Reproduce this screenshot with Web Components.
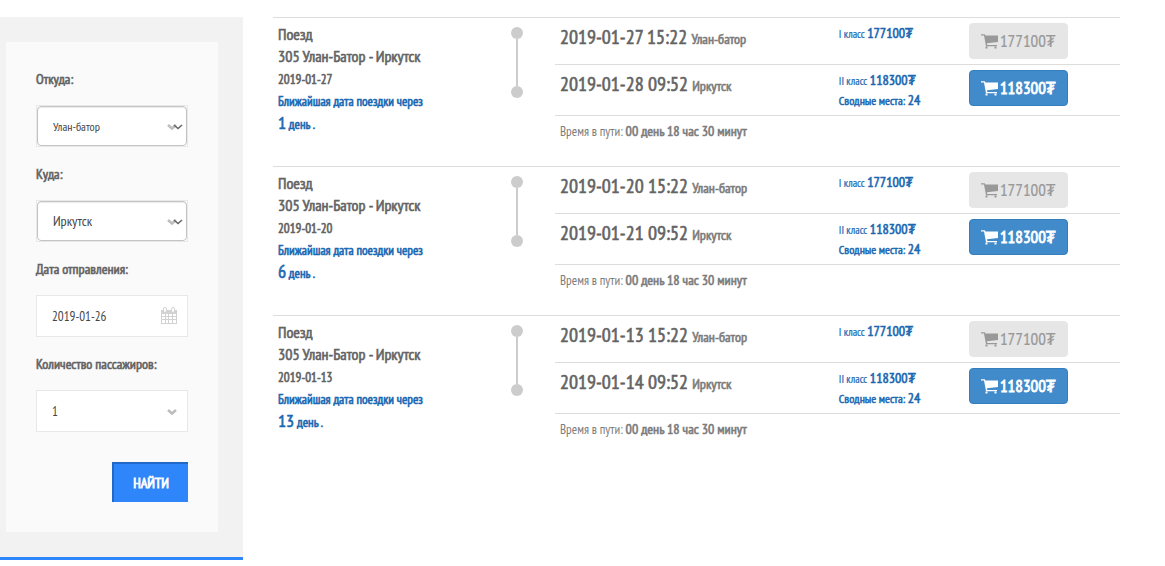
<!DOCTYPE html>
<html lang="ru">
<head>
<meta charset="utf-8">
<meta name="viewport" content="width=device-width, initial-scale=1">
<title>Поезд Улан-Батор - Иркутск</title>
<style>
body { margin: 0; background: #fff; color: #636363; font-family: "PT Sans Narrow", "Liberation Sans Narrow", "Noto Sans", sans-serif; font-size: 14px; line-height: 20px; --heavy: 0.6px; }
</style>
</head>
<body>
<booking-page>
  <search-panel slot="side">
    <search-field kind="select" label="Откуда:" value="Улан-батор" size="small"></search-field>
    <search-field kind="select" label="Куда:" value="Иркутск"></search-field>
    <search-field kind="date" label="Дата отправления:" value="2019-01-26"></search-field>
    <search-field kind="count" label="Количество пассажиров:" value="1"></search-field>
  </search-panel>
  <train-trip date="2019-01-27" arrival="2019-01-28" days="1"></train-trip>
  <train-trip date="2019-01-20" arrival="2019-01-21" days="6"></train-trip>
  <train-trip date="2019-01-13" arrival="2019-01-14" days="13"></train-trip>
</booking-page>

<script>
class BookingPage extends HTMLElement {
  constructor() {
    super();
    this.attachShadow({ mode: 'open' }).innerHTML = `
      <style>
        :host { display: grid; grid-template-columns: 243px minmax(0, 1fr); gap: 30px; align-items: start; padding: 17px 45px 0 0; }
        main { display: flex; flex-direction: column; }
      </style>
      <slot name="side"></slot>
      <main><slot></slot></main>`;
  }
}

class SearchPanel extends HTMLElement {
  constructor() {
    super();
    this.attachShadow({ mode: 'open' }).innerHTML = `
      <style>
        :host { display: block; background: #f2f2f2; border-bottom: 3px solid #2f86fa; padding: 25px 25px 25px 6px; }
        form { background: #fafafa; padding: 27px 30px 30px; display: flex; flex-direction: column; gap: 17px; }
        button { align-self: flex-end; width: 76px; height: 40px; margin-top: 13px; padding: 0; border: 0 solid #2268c6; border-width: 2px 0 0 2px; background: #2f86fa; color: #fff; font-family: inherit; font-size: 14px; -webkit-text-stroke: 0.8px; cursor: pointer; }
      </style>
      <form><slot></slot><button type="button">НАЙТИ</button></form>`;
  }
}

const chevron = (cls, colour, w) => `<svg class="${cls}" width="10" height="6" viewBox="0 0 10 6" aria-hidden="true"><path d="M1 1l4 3.5L9 1" fill="none" stroke="${colour}" stroke-width="${w}"/></svg>`;
const calendar = `<svg class="cal" width="16" height="17" viewBox="0 0 16 17" aria-hidden="true"><path d="M0 3h16v14H0z" fill="#d2d2d2"/><path d="M1 7h3v2H1zM5 7h2v2H5zM8 7h3v2H8zM12 7h3v2h-3zM1 10h3v2H1zM5 10h2v2H5zM8 10h3v2H8zM12 10h3v2h-3zM1 13h3v3H1zM5 13h2v3H5zM8 13h3v3H8zM12 13h3v3h-3z" fill="#fff"/><rect x="2.5" y=".5" width="3" height="5" rx="1.5" fill="#fff" stroke="#d2d2d2"/><rect x="10.500" y=".5" width="3" height="5" rx="1.5" fill="#fff" stroke="#d2d2d2"/></svg>`;

class SearchField extends HTMLElement {
  connectedCallback() {
    const { kind, label, value, size } = {
      kind: this.getAttribute('kind'), label: this.getAttribute('label'),
      value: this.getAttribute('value'), size: this.getAttribute('size') || ''
    };
    const control = kind === 'date'
      ? `<input id="control" type="text" value="${value}">${calendar}`
      : `<select id="control" class="${size}"><option>${value}</option></select>${chevron('chev', '#bdbdbd', 2.6)}${kind === 'select' ? chevron('chev native', '#666', 1.6) : ''}`;
    const root = this.shadowRoot || this.attachShadow({ mode: 'open' });
    root.innerHTML = `
      <style>
        :host { display: flex; flex-direction: column; gap: 16px; }
        label { -webkit-text-stroke: var(--heavy); height: 20px; line-height: 20px; white-space: nowrap; }
        .box { position: relative; box-sizing: border-box; height: 42px; border: 1px solid #e8e8e8; background: #fff; }
        select, input { appearance: none; display: block; box-sizing: border-box; width: 100%; height: 40px; margin: 0; padding: 0 28px 0 15px; border: 0; background: transparent; color: #444; font-family: inherit; font-size: 13px; outline: 0; }
        .select select { border: 1px solid #c4c4c4; border-radius: 4px; box-shadow: inset 0 1px 1px rgba(0,0,0,.08); font-size: 14px; }
        .select select.small { font-size: 12px; }
        svg { position: absolute; pointer-events: none; }
        .chev { right: 10px; top: 18px; }
        .native { right: 4px; }
        .cal { right: 10px; top: 11px; }
      </style>
      <label for="control">${label}</label>
      <div class="box ${kind}">${control}</div>`;
  }
}

class BuyButton extends HTMLElement {
  connectedCallback() {
    const off = this.hasAttribute('disabled');
    const root = this.shadowRoot || this.attachShadow({ mode: 'open' });
    root.innerHTML = `
      <style>
        :host { display: block; }
        button { display: flex; align-items: center; justify-content: center; gap: 2px; box-sizing: border-box; width: 99px; height: 36px; margin: 0; padding: 0; border: 1px solid #357ebd; border-radius: 4px; background: #428bca; color: #fff; font-family: inherit; font-size: 17px; -webkit-text-stroke: 0.8px; line-height: 20px; white-space: nowrap; cursor: pointer; }
        button:disabled { background: #e6e6e6; border-color: #e6e6e6; color: #999; -webkit-text-stroke: 0.2px; cursor: default; }
      </style>
      <button type="button" ${off ? 'disabled' : ''}><svg width="17" height="15" viewBox="0 0 17 15" aria-hidden="true"><path d="M0 .3h3.800l.6 1.200H17V8L6 9.300l.3 1.700H16v1.300H5L3 1.600H0z" fill="currentColor"/><path d="M4.500 12.500h2v2h-2zM13.500 12.500h2v2h-2z" fill="currentColor"/></svg><span><slot></slot></span></button>`;
  }
}

class TrainTrip extends HTMLElement {
  connectedCallback() {
    const date = this.getAttribute('date'), arrival = this.getAttribute('arrival'), days = this.getAttribute('days');
    const root = this.shadowRoot || this.attachShadow({ mode: 'open' });
    root.innerHTML = `
      <style>
        :host { display: grid; grid-template-columns: 238fr 44fr 565fr; border-top: 1px solid #ddd; }
        b { font-weight: normal; -webkit-text-stroke: var(--heavy); }
        .info { padding: 5px 5px 0; line-height: 22px; -webkit-text-stroke: var(--heavy); font-size: 13px; }
        .info div { white-space: nowrap; }
        .info .name { font-size: 16px; }
        .info .day { padding-top: 2px; }
        .near { color: #1a68b2; }
        .near b { font-size: 18px; line-height: 20px; }
        .route { display: flex; flex-direction: column; align-items: center; width: 12px; padding-top: 9px; }
        .route i { width: 12px; height: 12px; border-radius: 50%; background: #ccc; }
        .route span { width: 2px; height: 47px; background: #ccc; }
        table { width: 100%; border-collapse: separate; border-spacing: 0; table-layout: fixed; }
        .place { width: 49%; } .fare { width: 23%; }
        td { box-sizing: border-box; height: 46px; padding: 5px; vertical-align: top; white-space: nowrap; }
        tr:nth-child(n+2) td { border-top: 1px solid #ddd; height: 51px; }
        td:nth-child(3) { padding-left: 7px; }
        .time { font-size: 20px; line-height: 28px; -webkit-text-stroke: var(--heavy); }
        .time small { font-size: 14px; color: #7c7c7c; }
        .price { color: #1a68b2; font-size: 12px; line-height: 20px; -webkit-text-stroke: 0.5px; padding: 6px 0 4px 7px; }
        .price b { font-size: 14px; line-height: 16px; }
        .price span { font-size: 11px; -webkit-text-stroke: 0.2px; }
        .way { font-size: 13px; line-height: 22px; color: #7c7c7c; }
        .way b { font-size: 14px; line-height: 20px; }
      </style>
      <div class="info">
        <div class="name">Поезд</div>
        <div class="name">305 Улан-Батор - Иркутск</div>
        <div class="day">${date}</div>
        <div class="near">Ближайшая дата поездки через</div>
        <div class="near"><b>${days}</b> день .</div>
      </div>
      <div class="route" aria-hidden="true"><i></i><span></span><i></i></div>
      <table>
        <colgroup><col class="place"><col class="fare"><col></colgroup>
        <tbody>
        <tr><td class="time">${date} 15:22 <small>Улан-батор</small></td><td class="price"><span>I класс</span> <b>177100₮</b></td><td><buy-button disabled>177100₮</buy-button></td></tr>
        <tr><td class="time">${arrival} 09:52 <small>Иркутск</small></td><td class="price"><span>II класс</span> <b>118300₮</b><br>Сводные места: <b>24</b></td><td><buy-button>118300₮</buy-button></td></tr>
        <tr><td class="way" colspan="3">Время в пути: <b>00 день 18 час 30 минут</b></td></tr>
        </tbody>
      </table>`;
  }
}

customElements.define('booking-page', BookingPage);
customElements.define('search-panel', SearchPanel);
customElements.define('search-field', SearchField);
customElements.define('buy-button', BuyButton);
customElements.define('train-trip', TrainTrip);
</script>
</body>
</html>
